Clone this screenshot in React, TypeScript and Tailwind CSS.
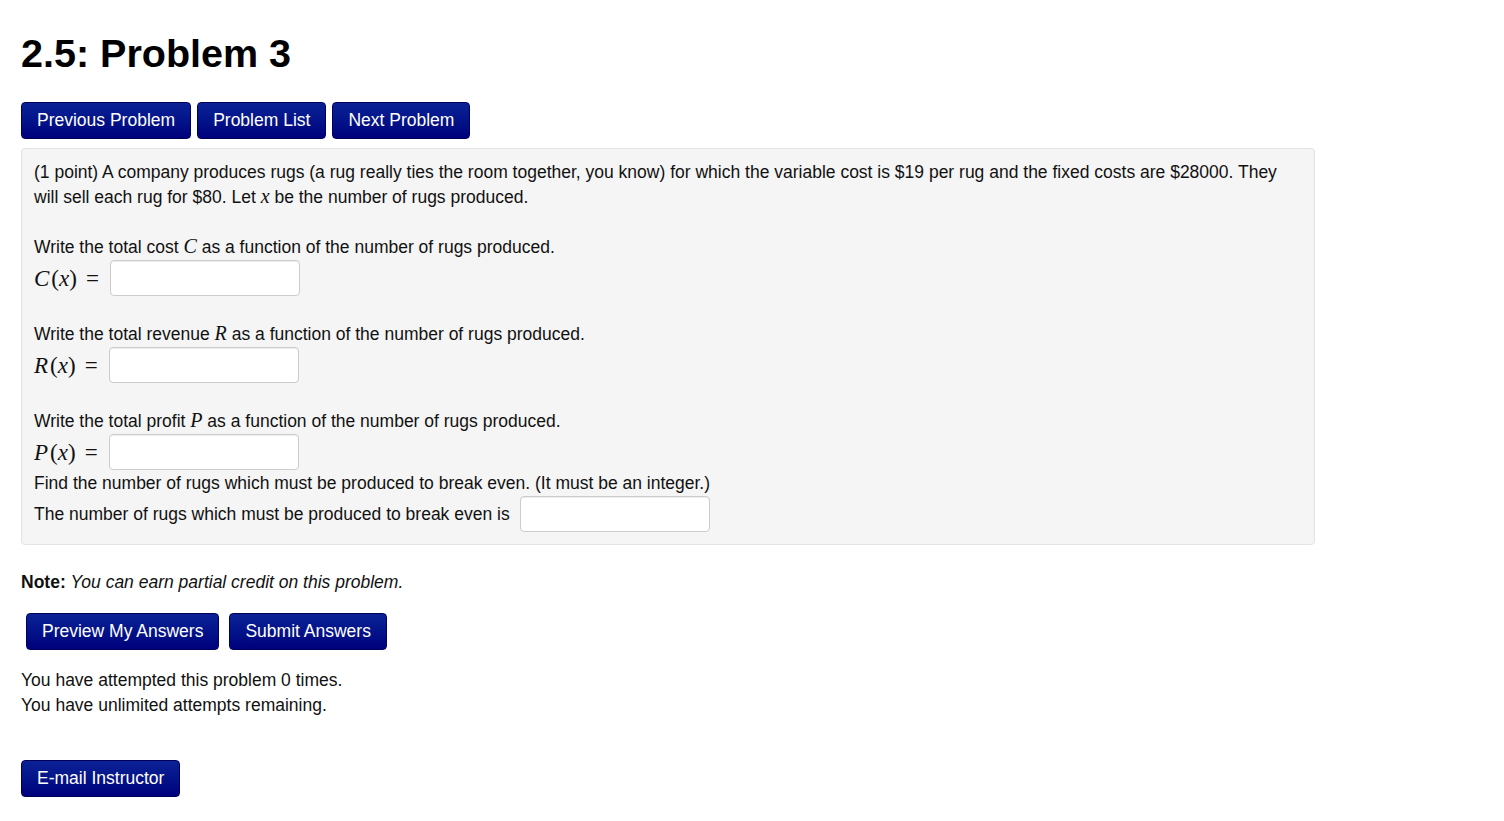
import React from "react";

const btn =
  "h-[37px] px-[15px] rounded-[4px] border border-[#00005a] bg-gradient-to-b from-[#0c2196] to-[#00007c] text-white text-[17.5px] leading-none";

function M({ children }: { children: React.ReactNode }) {
  return <span className="font-['Liberation_Serif',serif] italic text-[20px] leading-[20px]">{children}</span>;
}

function Fn({ v }: { v: string }) {
  return (
    <span className="font-['Liberation_Serif',serif] text-[23px] leading-none whitespace-nowrap">
      <span className="italic">{v}</span>
      <span className="ml-[2px]">(</span>
      <span className="italic">x</span>
      <span>)</span>
      <span className="ml-[9px]">=</span>
    </span>
  );
}

function Answer() {
  return (
    <input
      className="w-[190px] h-[36px] rounded-[4px] border border-[#cccccc] bg-white shadow-[inset_0_1px_1px_rgba(0,0,0,0.075)]"
      type="text"
    />
  );
}

export default function App() {
  return (
    <div className="min-h-screen bg-white px-[21px] pt-[28px] font-['Liberation_Sans',Arial,sans-serif] text-[#111]">
      <h2 className="text-[39.5px] font-bold leading-[50px] text-black">2.5: Problem 3</h2>

      <div className="mt-[24px] flex gap-[6px]">
        <button className={btn}>Previous Problem</button>
        <button className={btn}>Problem List</button>
        <button className={btn}>Next Problem</button>
      </div>

      <div className="mt-[9px] w-[1294px] rounded-[4px] border border-[#e3e3e3] bg-[#f5f5f5] px-[12px] pt-[11px] pb-[12px] text-[17.5px] leading-[25px]">
        <p>
          (1 point) A company produces rugs (a rug really ties the room together, you know) for which the variable cost is
          $19 per rug and the fixed costs are $28000. They will sell each rug for $80. Let <M>x</M> be the number of rugs
          produced.
        </p>

        <p className="mt-[25px]">
          Write the total cost <M>C</M> as a function of the number of rugs produced.
        </p>
        <div className="flex items-center gap-[11px]">
          <Fn v="C" />
          <Answer />
        </div>

        <p className="mt-[26px]">
          Write the total revenue <M>R</M> as a function of the number of rugs produced.
        </p>
        <div className="flex items-center gap-[11px]">
          <Fn v="R" />
          <Answer />
        </div>

        <p className="mt-[26px]">
          Write the total profit <M>P</M> as a function of the number of rugs produced.
        </p>
        <div className="flex items-center gap-[11px]">
          <Fn v="P" />
          <Answer />
        </div>

        <p className="mt-[1px]">Find the number of rugs which must be produced to break even. (It must be an integer.)</p>
        <div className="flex items-center gap-[10px]">
          <span>The number of rugs which must be produced to break even is</span>
          <Answer />
        </div>
      </div>

      <p className="mt-[25px] text-[17.5px] leading-[25px]">
        <b>Note:</b> <i>You can earn partial credit on this problem.</i>
      </p>

      <div className="mt-[18px] ml-[5px] flex gap-[10px]">
        <button className={btn}>Preview My Answers</button>
        <button className={btn}>Submit Answers</button>
      </div>

      <div className="mt-[18px] text-[17.5px] leading-[25px]">
        <p>You have attempted this problem 0 times.</p>
        <p>You have unlimited attempts remaining.</p>
      </div>

      <button className={`${btn} mt-[42px]`}>E-mail Instructor</button>
    </div>
  );
}
